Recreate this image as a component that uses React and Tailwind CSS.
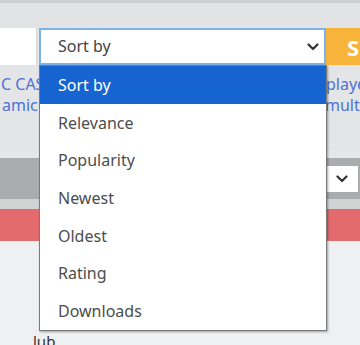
import React from "react";

const options = ["Sort by", "Relevance", "Popularity", "Newest", "Oldest", "Rating", "Downloads"];

const Chevron = ({ className }) => (
  <svg viewBox="0 0 12 8" className={className} fill="none" stroke="currentColor" strokeWidth="2.2" strokeLinecap="round" strokeLinejoin="round">
    <path d="M1.5 1.5 L6 6 L10.5 1.5" />
  </svg>
);

export default function App() {
  return (
    <div className="relative w-[360px] h-[345px] overflow-hidden bg-[#eef0f2] text-[16px]" style={{ fontFamily: '"Noto Sans", "Open Sans", sans-serif' }}>
      {/* top bar */}
      <div className="h-[3px] bg-[#cdced0]" />
      <div className="h-[25px] bg-[#e2e3e5]" />

      {/* search row */}
      <div className="flex h-[37px] bg-[#e2e3e5]">
        <div className="w-[37px] bg-white border-r border-[#d8d8d8]" />
        <div className="w-[2px]" />
        <div className="w-[287px] bg-white border-2 border-[#7cb2ea] flex items-center justify-between pl-[17px] pr-[5px] text-[#444]">
          <span className="-mt-[1px]">Sort by</span>
          <Chevron className="w-[12px] h-[8px] text-[#333]" />
        </div>
        <div className="flex-1 bg-[#f8b43a] flex items-center pl-[21px] text-white text-[22px] font-bold leading-none">
          S
        </div>
      </div>

      {/* content behind dropdown */}
      <div className="flex">
        <div className="w-[39px] shrink-0">
          <div className="h-[85px] bg-[#e4e5e7] pt-[9px] text-[#4f72d6] leading-[21px] whitespace-nowrap overflow-hidden">
            <div className="pl-[1px]">C CAS</div>
            <div className="pl-[2px]">amic</div>
          </div>
        </div>
        <div className="flex-1" />
        <div className="w-[34px] shrink-0 overflow-hidden">
          <div className="h-[85px] bg-[#e4e5e7] pt-[9px] text-[#4f72d6] leading-[21px] whitespace-nowrap">
            <div>playe</div>
            <div className="-ml-[1px]">multip</div>
          </div>
        </div>
      </div>
      <div className="h-[8px] bg-[#e6e7e9]" />
      <div className="h-[41px] bg-[#aaacb0] flex justify-end items-center pr-[2px]">
        <div className="w-[32px] h-[26px] bg-white flex items-center justify-center text-[#333]">
          <Chevron className="w-[12px] h-[8px]" />
        </div>
      </div>
      <div className="h-[10px] bg-[#d0d2d4]" />
      <div className="h-[32px] bg-[#e46b6d]" />
      <div className="pt-[93px] pl-[33px] text-[#333] text-[15px] leading-none">lub</div>

      {/* dropdown list */}
      <div className="absolute left-[39px] top-[65px] w-[288px] bg-white border border-[#7a7a7a] shadow-[1px_1px_2px_rgba(0,0,0,0.35)] text-[#4d4d4d]">
        {options.map((opt, i) => (
          <div
            key={opt}
            className={
              i === 0
                ? "h-[37.7px] flex items-center pl-[18px] bg-[#1664d2] text-white"
                : "h-[37.7px] flex items-center pl-[18px]"
            }
          >
            {opt}
          </div>
        ))}
      </div>
    </div>
  );
}
